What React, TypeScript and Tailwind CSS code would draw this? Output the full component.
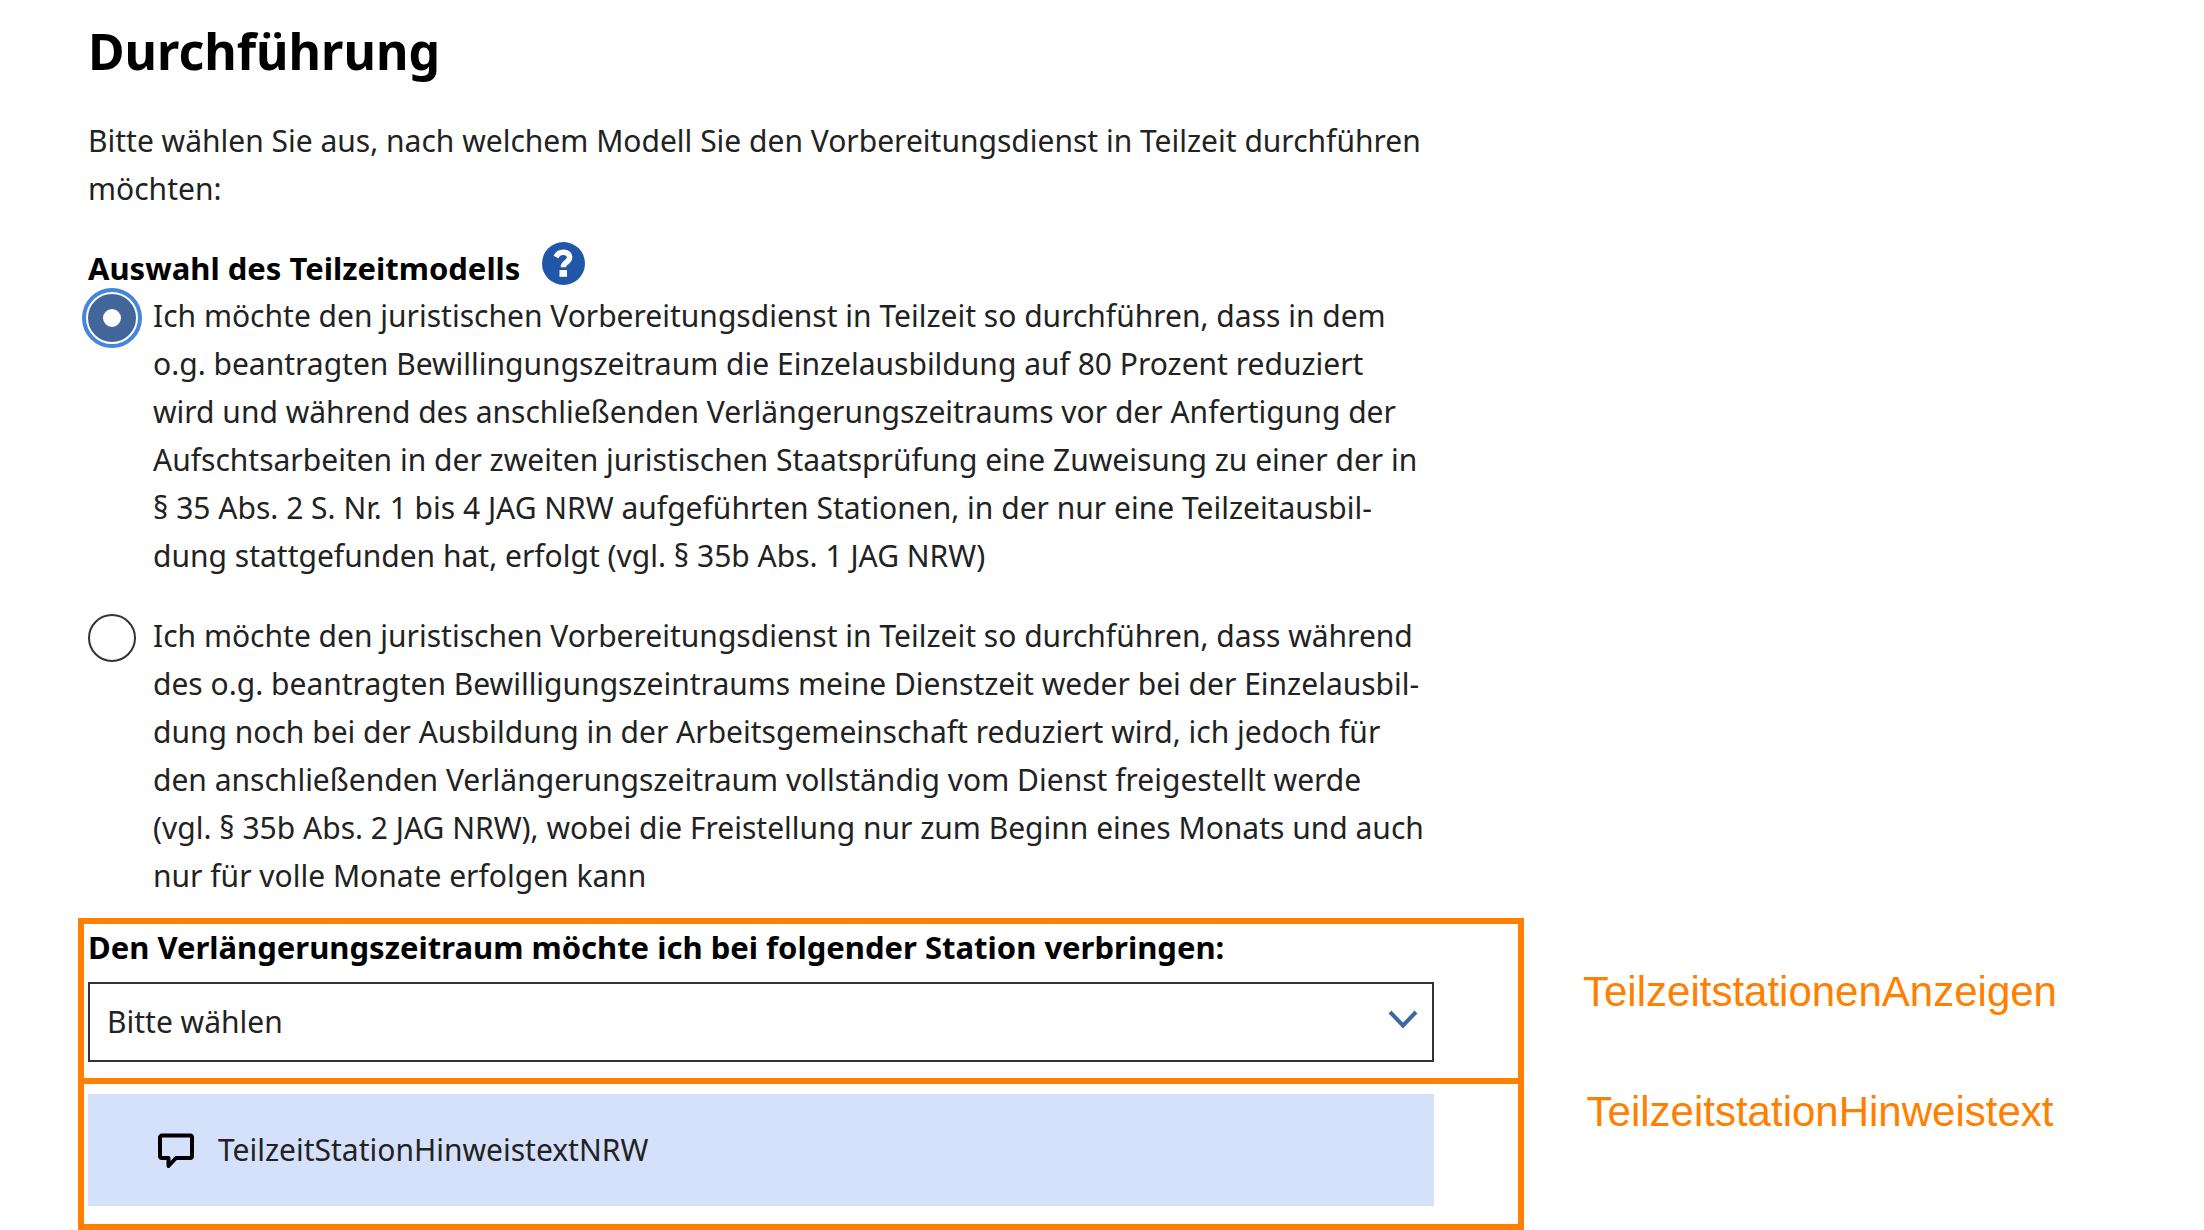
import { useState } from 'react';
import type { ReactNode } from 'react';

const MODELLE = [
  {
    id: 'modell-1',
    text: 'Ich möchte den juristischen Vorbereitungsdienst in Teilzeit so durchführen, dass in dem o.g. beantragten Bewillingungszeitraum die Einzelausbildung auf 80 Prozent reduziert wird und während des anschließenden Verlängerungszeitraums vor der Anfertigung der Aufschtsarbeiten in der zweiten juristischen Staatsprüfung eine Zuweisung zu einer der in §\u00a035 Abs. 2 S. Nr. 1 bis 4 JAG NRW aufgeführten Stationen, in der nur eine Teilzeitausbil\u00addung stattgefunden hat, erfolgt (vgl.\u00a0§\u00a035b Abs. 1 JAG NRW)',
  },
  {
    id: 'modell-2',
    text: 'Ich möchte den juristischen Vorbereitungsdienst in Teilzeit so durchführen, dass während des o.g. beantragten Bewilligungszeintraums meine Dienstzeit weder bei der Einzelausbil\u00addung noch bei der Ausbildung in der Arbeitsgemeinschaft reduziert wird, ich jedoch für den anschließenden Verlängerungszeitraum vollständig vom Dienst freigestellt werde (vgl.\u00a0§\u00a035b Abs. 2 JAG NRW), wobei die Freistellung nur zum Beginn eines Monats und auch nur für volle Monate erfolgen kann',
  },
];

function HelpIcon() {
  return (
    <svg className="h-[43px] w-[43px]" viewBox="0 0 43 43" fill="none" aria-hidden="true">
      <circle cx="21.5" cy="21.5" r="21.5" fill="#2157a8" />
      <path d="M14 15c1.500-3.300 4-4.800 7.300-4.800 4 0 6.300 2.200 6.300 5.300 0 4.700-6.300 4.500-6.300 9.800" stroke="#fff" strokeWidth="5.500" />
      <path d="M17.500 28h7.500v6.800h-7.500z" fill="#fff" />
    </svg>
  );
}

function CommentIcon() {
  return (
    <svg className="h-9 w-9 shrink-0" viewBox="0 0 36 36" fill="none" stroke="#000" strokeWidth="4" strokeLinejoin="round" aria-hidden="true">
      <path d="M4 3.500h28a2 2 0 0 1 2 2V24a2 2 0 0 1-2 2H18l-7.500 8v-8H4a2 2 0 0 1-2-2V5.500a2 2 0 0 1 2-2z" />
    </svg>
  );
}

// Umrandeter Bereich mit Bezeichnung rechts daneben
function Bereich({ name, className, nameClassName, children }: { name: string; className: string; nameClassName: string; children: ReactNode }) {
  return (
    <div className="flex items-stretch">
      <div className={`w-full max-w-[1446px] border-6 border-[#ff8000] pl-1 pr-[84px] ${className}`}>{children}</div>
      <div className={`flex-1 pr-[88px] text-center font-['Liberation_Sans',Arial,sans-serif] text-[42px] leading-[48px] text-[#ff8000] ${nameClassName}`}>
        {name}
      </div>
    </div>
  );
}

export default function App() {
  const [modell, setModell] = useState('modell-1');

  return (
    <main className="bg-white font-['Noto_Sans',sans-serif] text-[30px] leading-[48px] text-[#222]">
      <div className="max-w-[1434px] pl-[88px] pt-4">
        <h1 className="text-[50px] leading-[70px] font-bold text-black">Durchführung</h1>
        <p className="mt-[31px]">
          Bitte wählen Sie aus, nach welchem Modell Sie den Vorbereitungsdienst in Teilzeit durchführen möchten:
        </p>

        {/* Teilzeitmodell */}
        <div role="radiogroup" aria-labelledby="modell-label" className="mt-[29px]">
          <div className="flex h-[50px] items-start gap-[22px]">
            <span id="modell-label" className="pt-[2px] text-[31px] font-bold text-black">Auswahl des Teilzeitmodells</span>
            <button type="button" aria-label="Hilfe">
              <HelpIcon />
            </button>
          </div>
          <div className="flex flex-col gap-8 pr-2">
            {MODELLE.map((m) => (
              <div key={m.id} className="flex items-start gap-[17px]">
                <input
                  type="radio"
                  id={m.id}
                  name="modell"
                  checked={modell === m.id}
                  onChange={() => setModell(m.id)}
                  className="mt-[2px] h-12 w-12 shrink-0 appearance-none rounded-full border-2 border-[#333] bg-white checked:border-[15px] checked:border-[#42659a] checked:outline-4 checked:outline-offset-2 checked:outline-[#4486da]"
                />
                <label htmlFor={m.id}>{m.text}</label>
              </div>
            ))}
          </div>
        </div>
      </div>

      <div className="mt-[18px] pl-[78px]">
        <Bereich name="TeilzeitstationenAnzeigen" className="pb-4" nameClassName="pt-[50px]">
          <label htmlFor="station" className="block text-[31px] leading-[46px] font-bold text-black">
            Den Verlängerungszeitraum möchte ich bei folgender Station verbringen:
          </label>
          <div className="relative mt-3">
            <select id="station" className="h-20 w-full appearance-none border-2 border-[#333] bg-white px-[17px]">
              <option>Bitte wählen</option>
            </select>
            <svg className="pointer-events-none absolute top-7 right-4 h-5 w-[30px]" viewBox="0 0 30 20" fill="none" stroke="#3f67a0" strokeWidth="4" aria-hidden="true">
              <path d="M2 2l13 13.500L28 2" />
            </svg>
          </div>
        </Bereich>
        <Bereich name="TeilzeitstationHinweistext" className="-mt-[6px] pt-[10px] pb-[18px]" nameClassName="pt-1">
          <div className="flex h-28 items-center gap-6 bg-[#d5e0fa] px-[70px]">
            <CommentIcon />
            <span>TeilzeitStationHinweistextNRW</span>
          </div>
        </Bereich>
      </div>
    </main>
  );
}
